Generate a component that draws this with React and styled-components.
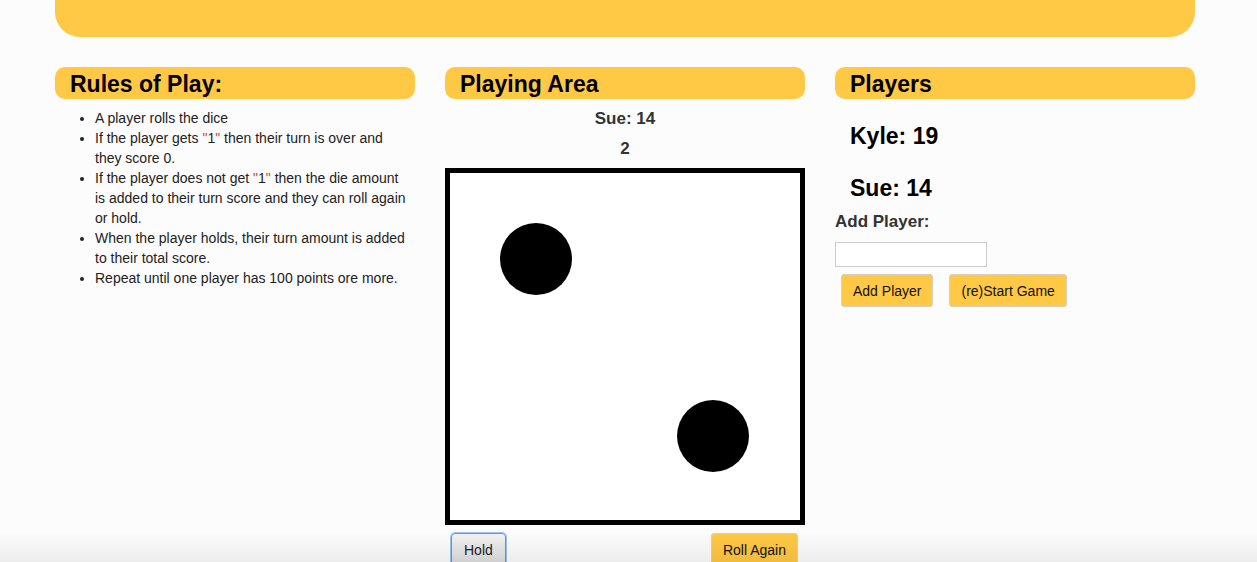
import React from 'react';
import styled, { createGlobalStyle } from 'styled-components';

const GlobalStyle = createGlobalStyle`
  html, body {
    margin: 0;
    padding: 0;
    background: #fcfcfc;
    font-family: "Liberation Sans", Arial, sans-serif;
    font-size: 14px;
    line-height: 20px;
    color: #333;
  }
  * {
    box-sizing: border-box;
  }
`;

const rules = [
  'A player rolls the dice',
  'If the player gets "1" then their turn is over and they score 0.',
  'If the player does not get "1" then the die amount is added to their turn score and they can roll again or hold.',
  'When the player holds, their turn amount is added to their total score.',
  'Repeat until one player has 100 points ore more.',
];

const players = [
  { id: 1, name: 'Kyle', score: 19 },
  { id: 2, name: 'Sue', score: 14 },
];

// color the quote marks like the original page does
function RuleText({ text }) {
  const parts = text.split('"');
  return parts.map((p, i) => (
    <React.Fragment key={i}>
      {i > 0 && <Quote>"</Quote>}
      {p}
    </React.Fragment>
  ));
}

function App() {
  return (
    <>
      <GlobalStyle />
      <Page>
        <TopBar />
        <Columns>
          <Column>
            <SectionTitle>Rules of Play:</SectionTitle>
            <RuleList>
              {rules.map((rule) => (
                <li key={rule}>
                  <RuleText text={rule} />
                </li>
              ))}
            </RuleList>
          </Column>

          <Column>
            <SectionTitle>Playing Area</SectionTitle>
            <TurnInfo>Sue: 14</TurnInfo>
            <TurnInfo>2</TurnInfo>
            <Die>
              <svg width="100%" height="100%" viewBox="0 0 350 347">
                <circle cx="86" cy="86" r="36" fill="#000" />
                <circle cx="263" cy="263" r="36" fill="#000" />
              </svg>
            </Die>
            <PlayControls>
              <HoldButton>Hold</HoldButton>
              <YellowButton>Roll Again</YellowButton>
            </PlayControls>
          </Column>

          <Column>
            <SectionTitle>Players</SectionTitle>
            <PlayerList>
              {players.map((p) => (
                <PlayerScore key={p.id}>
                  {p.name}: {p.score}
                </PlayerScore>
              ))}
            </PlayerList>
            <AddLabel>Add Player:</AddLabel>
            <NameInput type="text" />
            <FormButtons>
              <YellowButton>Add Player</YellowButton>
              <YellowButton>(re)Start Game</YellowButton>
            </FormButtons>
          </Column>
        </Columns>
      </Page>
      <WindowShade />
    </>
  );
}

export default App;

const Page = styled.div`
  width: 1140px;
  margin-left: 55px;
`;

const TopBar = styled.div`
  height: 37px;
  background: #ffc845;
  border-radius: 0 0 25px 25px;
`;

const Columns = styled.div`
  display: grid;
  grid-template-columns: repeat(3, 360px);
  column-gap: 30px;
  margin-top: 30px;
`;

const Column = styled.div`
  display: flex;
  flex-direction: column;
`;

const SectionTitle = styled.h3`
  margin: 0;
  height: 32px;
  padding-left: 15px;
  background: #ffc845;
  border-radius: 10px;
  font-size: 23px;
  font-weight: 700;
  line-height: 34px;
  color: #000;
`;

const RuleList = styled.ul`
  margin: 9px 0 0;
  padding-left: 40px;
  padding-right: 4px;
  font-size: 14px;
  line-height: 20px;
  color: #222;
`;

const Quote = styled.span`
  color: #d4451c;
`;

const TurnInfo = styled.p`
  margin: 9px 0 0;
  text-align: center;
  font-size: 17px;
  font-weight: 700;
  line-height: 21px;
  color: #333;
`;

const Die = styled.div`
  width: 360px;
  height: 357px;
  margin-top: 9px;
  border: 5px solid #000;
  background: #fff;

  svg {
    display: block;
  }
`;

const PlayControls = styled.div`
  display: flex;
  justify-content: space-between;
  margin-top: 8px;
  padding: 0 7px 0 6px;
`;

const YellowButton = styled.button`
  height: 33px;
  padding: 0 11px;
  background: #ffc845;
  border: 1px solid #d8d0c0;
  border-radius: 3px;
  font-family: "Liberation Sans", Arial, sans-serif;
  font-size: 14px;
  color: #111;
`;

const HoldButton = styled.button`
  height: 33px;
  padding: 0 12px;
  background: linear-gradient(#f2f2f2, #dcdcdc);
  border: 1px solid #5b9be0;
  box-shadow: 0 0 0 1px #9cc4f0;
  border-radius: 4px;
  font-family: "Liberation Sans", Arial, sans-serif;
  font-size: 14px;
  color: #222;
`;

const PlayerList = styled.div`
  display: flex;
  flex-direction: column;
  gap: 24px;
  margin-top: 23px;
`;

const PlayerScore = styled.h3`
  margin: 0;
  padding-left: 15px;
  font-size: 23px;
  font-weight: 700;
  line-height: 28px;
  color: #000;
`;

const AddLabel = styled.label`
  margin-top: 10px;
  font-size: 17px;
  font-weight: 700;
  line-height: 20px;
  color: #333;
`;

const NameInput = styled.input`
  width: 152px;
  height: 25px;
  margin-top: 10px;
  border: 1px solid #ccc;
  background: #fff;
`;

const FormButtons = styled.div`
  display: flex;
  gap: 16px;
  margin: 7px 0 0 6px;
`;

const WindowShade = styled.div`
  position: fixed;
  left: 0;
  right: 0;
  top: 532px;
  height: 30px;
  pointer-events: none;
  background: linear-gradient(rgba(0, 0, 0, 0), rgba(0, 0, 0, 0.06));
`;
